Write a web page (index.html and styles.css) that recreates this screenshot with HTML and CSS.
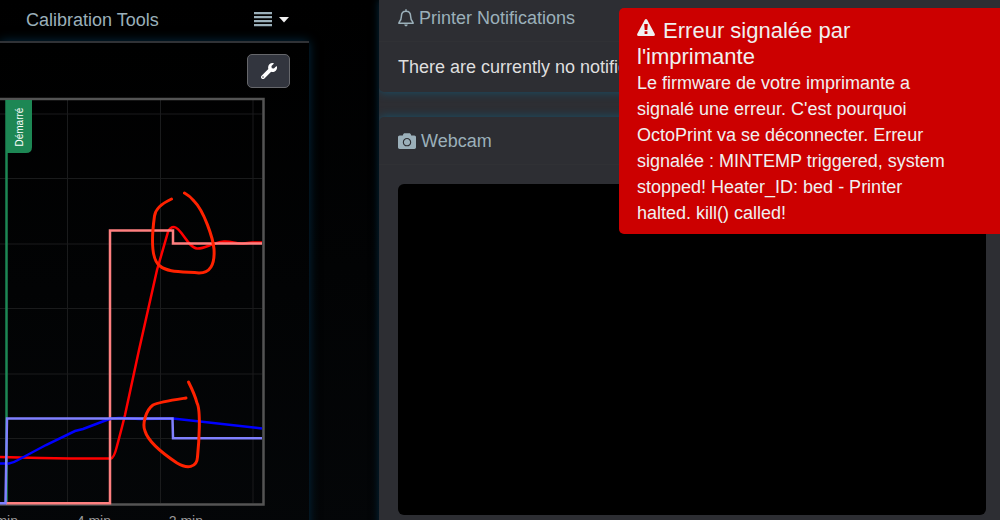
FILE: index.html
```
<!DOCTYPE html>
<html lang="fr">
<head>
    <meta charset="UTF-8">
    <meta name="viewport" content="width=device-width, initial-scale=1.0">
    <title>OctoPrint</title>
    <link rel="stylesheet" href="styles.css">
</head>

<body>
    <div class="layout">
        <!-- Temperature panel -->
        <main class="main-panel">
            <nav class="tabs">
                <a href="#calibration">Calibration Tools</a>
                <button class="menu-button" type="button" aria-label="Menu">
                    <svg width="18" height="15" viewBox="0 0 18 15" fill="#9bb0ba">
                        <path d="M0 0h18v2.3H0zM0 4h18v2.3H0zM0 8h18v2.3H0zM0 12h18v2.3H0z"/>
                    </svg>
                    <svg width="10" height="6" viewBox="0 0 10 6" fill="#f0f0f0">
                        <path d="M0 0h10L5 5.5z"/>
                    </svg>
                </button>
            </nav>

            <section class="graph-card">
                <button class="tool-button" type="button" aria-label="Settings">
                    <svg width="16" height="16" viewBox="0 0 512 512" fill="#fff">
                        <path d="M507.7 109.1c-2.2-9-13.5-12.1-20.1-5.5l-74.4 74.4-67.9-11.3-11.3-67.9 74.4-74.4c6.6-6.6 3.4-17.9-5.7-20.2C355.5-7.5 305.4 6.2 268.6 43c-39.6 39.6-50.4 97.1-34.1 147.2L18.7 406c-25 25-25 65.5 0 90.5s65.5 25 90.5 0l215.2-215.2c50.1 16.7 107.5 5.8 147.6-34.2 37.2-37.2 49-88.4 35.7-138zM64 472c-13.2 0-24-10.700-24-24s10.700-24 24-24 24 10.700 24 24-10.700 24-24 24z"/>
                    </svg>
                </button>

                <svg class="graph" viewBox="0 97 265 440" role="img" aria-label="Temperature graph">
                    <!-- grid -->
                    <path class="grid" d="M67.500 100V503M160.500 100V503M253 100V503M0 114H262M0 178.500H262M0 244H262M0 308.500H262M0 374H262M0 438.500H262"/>
                    <path class="frame" d="M0 99H263.500V504.500H0"/>

                    <!-- event marker -->
                    <path class="marker-line" d="M6.500 100V503"/>
                    <path class="marker" d="M6 100H32V147Q32 153 26 153H6z"/>
                    <text class="marker-text" transform="translate(22.500 146.500) rotate(-90)">Démarré</text>

                    <!-- temperatures -->
                    <path class="line actual-tool" d="M0 457L40 458L70 458.500H111Q114 458 117 446L122 427L125 415L139 350L157 270L168 232Q170 227 174 227C181 227 188 248 197 248.500C205 249 211 243 224 241.500C232 241 235 244 243 243.500L252 242.500H262"/>
                    <path class="line target-tool" d="M6 503.300H110V230.500H173V243.500H262"/>
                    <path class="line actual-bed" d="M0 463.500H9Q13 463 18 460L46 445L75 431L83 429L108 419.500Q113 417.500 122 418L140 419L173 418.500L262 428.500"/>
                    <path class="line target-bed" d="M0 503.300H5.500L7 418.500H172.500L173 438.200H262"/>

                    <!-- handwritten circles -->
                    <path class="note" d="M171.500 199Q156 206 154.500 216C152 234 150 259 160 266C167 272 179 271.500 199 273C210 273 215 265 214 249C213 238 204 211 194 201Q190 196 184.500 193"/>
                    <path class="note" d="M186 398C173 400 159 402 153 405C146 410 142 424 145 431C148 441 162 453 177 463C187 469 197 468 197.500 457C199 442 201 410 197 403Q195 395 188.500 382"/>

                    <!-- time axis -->
                    <text class="axis" x="18" y="526" text-anchor="end">6 min</text>
                    <text class="axis" x="111" y="526" text-anchor="end">4 min</text>
                    <text class="axis" x="203" y="526" text-anchor="end">2 min</text>
                </svg>
            </section>
        </main>

        <!-- Sidebar cards -->
        <aside class="sidebar">
            <section class="card notifications">
                <h2 class="card-title">
                    <svg width="16" height="18" viewBox="0 0 16 18" fill="none" stroke="#9bb0ba" stroke-width="1.5">
                        <path d="M8 2.200C4.600 2.200 3.400 4.800 3.400 7.200C3.400 11 2.200 12.300 1 13.500V14.300H15V13.500C13.800 12.300 12.600 11 12.600 7.200C12.600 4.800 11.400 2.200 8 2.200zM8 0.300V2.200"/>
                        <path d="M6.200 15.600H9.800Q9.600 17.400 8 17.400T6.200 15.600z" fill="#9bb0ba" stroke="none"/>
                    </svg>
                    Printer Notifications
                </h2>
                <p class="card-text">There are currently no notifications</p>
            </section>

            <section class="card webcam">
                <h2 class="card-title">
                    <svg width="18" height="16" viewBox="0 0 512 448" fill="#9bb0ba">
                        <path fill-rule="evenodd" d="M512 112v288c0 26.500-21.500 48-48 48H48c-26.500 0-48-21.500-48-48V112c0-26.500 21.500-48 48-48h88l12.300-32.900C155.300 12.400 173.200 0 193.200 0h125.500c20 0 37.900 12.400 44.900 31.100L376 64h88c26.500 0 48 21.500 48 48zM376 256c0-66.200-53.800-120-120-120s-120 53.800-120 120 53.800 120 120 120 120-53.800 120-120zm-32 0c0 48.500-39.500 88-88 88s-88-39.500-88-88 39.500-88 88-88 88 39.500 88 88z"/>
                    </svg>
                    Webcam
                </h2>
                <div class="webcam-view"></div>
            </section>
        </aside>
    </div>

    <!-- Error notification -->
    <div class="toast" role="alert">
        <h4>
            <svg width="18" height="17" viewBox="0 0 18 17" fill="#f0f0f0">
                <path fill-rule="evenodd" d="M7.800 0.700Q9 -0.700 10.200 0.700L17.800 15Q18.200 16.800 16.500 17H1.500Q-0.200 16.800 0.200 15zM7.200 5L7.700 11H10.300L10.800 5zM7.600 12.300V14.900H10.400V12.300z"/>
            </svg>
            Erreur signalée par l'imprimante
        </h4>
        <p>Le firmware de votre imprimante a signalé une erreur. C'est pourquoi OctoPrint va se déconnecter. Erreur signalée : MINTEMP triggered, system stopped! Heater_ID: bed - Printer halted. kill() called!</p>
    </div>
</body>
</html>
```
FILE: styles.css
```
/* ====== Base Styles ====== */
* {
    box-sizing: border-box;
    margin: 0;
    padding: 0;
}

body {
    font-family: "Liberation Sans", Arial, sans-serif;
    font-size: 18px;
    line-height: 26px;
    color: #dfdfdf;
    background-color: #020304;
    height: 100vh;
    overflow: hidden;
}

button {
    cursor: pointer;
}

.layout {
    display: grid;
    grid-template-columns: 379fr 621fr;
    min-height: 100vh;
}

/* ====== Temperature Panel ====== */
.main-panel {
    display: flex;
    flex-direction: column;
    padding-right: 70px;
    background: linear-gradient(#000, #040608);
}

.tabs {
    display: flex;
    align-items: center;
    justify-content: space-between;
    height: 41px;
    padding: 0 20px 2px 26px;
}

.tabs a {
    color: #9bb0ba;
    text-decoration: none;
}

.menu-button {
    display: flex;
    align-items: center;
    gap: 7px;
    background: none;
    border: none;
}

.graph-card {
    flex: 1;
    display: flex;
    flex-direction: column;
    padding: 11px 0 0;
    border-top: 2px solid #303236;
    background: linear-gradient(#000, #040608);
    box-shadow: 0 0 10px #042a42;
}

.tool-button {
    display: flex;
    align-items: center;
    justify-content: center;
    align-self: flex-end;
    width: 43px;
    height: 34px;
    margin: 0 19px 9px 0;
    border: 1px solid #66676b;
    border-radius: 5px;
    background-color: #32353e;
}

/* ====== Graph ====== */
.graph {
    display: block;
    width: calc(100% - 44px);
}

.graph path {
    fill: none;
}

.graph .grid {
    stroke: #1a1b1c;
    stroke-width: 1;
}

.graph .frame {
    stroke: #545454;
    stroke-width: 2.5;
}

.graph .marker-line {
    stroke: #1d8754;
    stroke-width: 2.5;
}

.graph .marker {
    fill: #1d8754;
}

.marker-text {
    fill: #fff;
    font-size: 10px;
}

.line {
    stroke-width: 2.5;
}

.actual-tool {
    stroke: #ff0000;
}

.target-tool {
    stroke: #ff8080;
}

.actual-bed {
    stroke: #0000ff;
}

.target-bed {
    stroke: #8080ff;
}

.note {
    stroke: #ff2200;
    stroke-width: 3;
    stroke-linecap: round;
}

.axis {
    fill: #999;
    font-size: 14px;
}

/* ====== Sidebar ====== */
.sidebar {
    display: flex;
    flex-direction: column;
    gap: 25px;
    overflow: hidden;
    background-color: #2d2e33;
    box-shadow: 0 0 8px #04293f;
}

.card {
    background-color: #2d2e33;
    box-shadow: 0 0 10px #17526c;
}

.notifications {
    border-radius: 0 0 5px 5px;
}

.webcam {
    flex: 1;
    border-radius: 5px 5px 0 0;
}

.card-title {
    display: flex;
    align-items: center;
    gap: 5px;
    padding: 5px 19px 10px;
    border-bottom: 1px solid #303135;
    font-size: 18px;
    font-weight: normal;
    color: #9bb0ba;
}

.card-text {
    padding: 12px 19px;
}

.webcam .card-title {
    padding-top: 11px;
}

.webcam-view {
    margin: 19px 14px 0 19px;
    aspect-ratio: 588 / 331;
    border-radius: 6px;
    background-color: #000;
}

/* ====== Toast ====== */
.toast {
    position: absolute;
    top: 8px;
    right: 0;
    width: 381px;
    padding: 10px 50px 8px 18px;
    border-radius: 5px 0 0 5px;
    background-color: #c00;
    color: #f0f0f0;
}

.toast h4 {
    font-size: 22px;
    font-weight: normal;
}

.toast svg {
    margin-right: 2px;
    vertical-align: 2px;
}
```
